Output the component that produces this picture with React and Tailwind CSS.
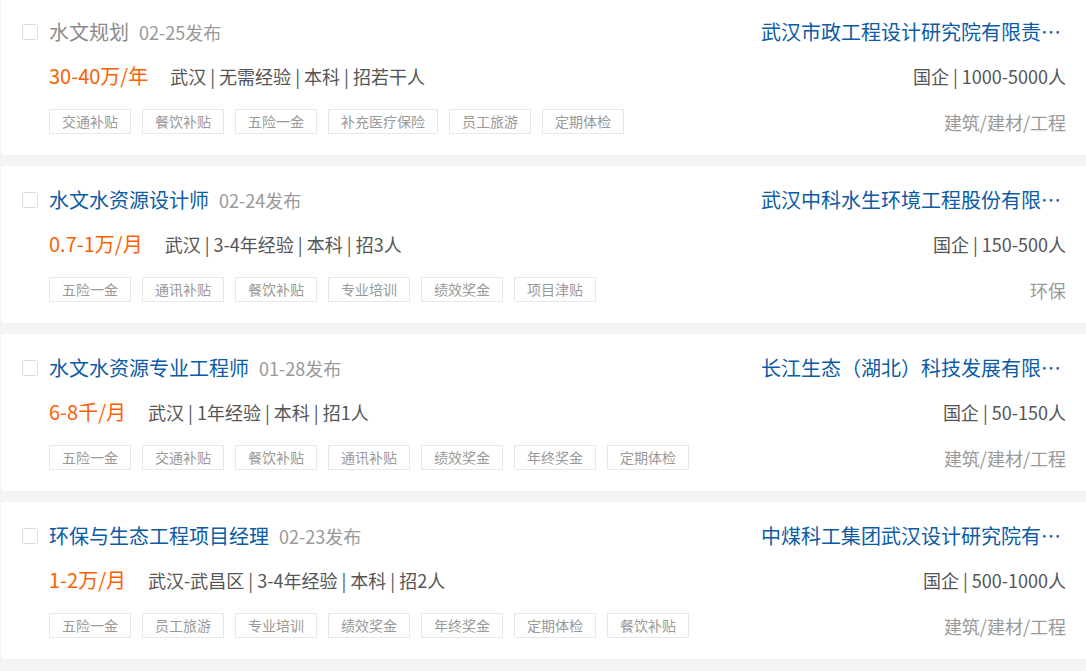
import React from 'react'

const jobs = [
  {
    title: '水文规划',
    visited: true,
    date: '02-25发布',
    salary: '30-40万/年',
    info: '武汉 | 无需经验 | 本科 | 招若干人',
    tags: ['交通补贴', '餐饮补贴', '五险一金', '补充医疗保险', '员工旅游', '定期体检'],
    company: '武汉市政工程设计研究院有限责任公司',
    companyInfo: '国企 | 1000-5000人',
    industry: '建筑/建材/工程',
  },
  {
    title: '水文水资源设计师',
    date: '02-24发布',
    salary: '0.7-1万/月',
    info: '武汉 | 3-4年经验 | 本科 | 招3人',
    tags: ['五险一金', '通讯补贴', '餐饮补贴', '专业培训', '绩效奖金', '项目津贴'],
    company: '武汉中科水生环境工程股份有限公司',
    companyInfo: '国企 | 150-500人',
    industry: '环保',
  },
  {
    title: '水文水资源专业工程师',
    date: '01-28发布',
    salary: '6-8千/月',
    info: '武汉 | 1年经验 | 本科 | 招1人',
    tags: ['五险一金', '交通补贴', '餐饮补贴', '通讯补贴', '绩效奖金', '年终奖金', '定期体检'],
    company: '长江生态（湖北）科技发展有限公司',
    companyInfo: '国企 | 50-150人',
    industry: '建筑/建材/工程',
  },
  {
    title: '环保与生态工程项目经理',
    date: '02-23发布',
    salary: '1-2万/月',
    info: '武汉-武昌区 | 3-4年经验 | 本科 | 招2人',
    tags: ['五险一金', '员工旅游', '专业培训', '绩效奖金', '年终奖金', '定期体检', '餐饮补贴'],
    company: '中煤科工集团武汉设计研究院有限公司',
    companyInfo: '国企 | 500-1000人',
    industry: '建筑/建材/工程',
  },
]

const JobCard = ({ job }) => {
  return (
    <div className="h-[157px] shrink-0 bg-white rounded-[4px] pl-[21px] pr-[25px] pt-[22px] flex flex-col">
      {/* title row */}
      <div className="flex items-center justify-between h-6">
        <div className="flex items-center">
          <span className="w-4 h-4 border border-[#dcdcdc] rounded-[2px] bg-white mr-[11px]"></span>
          <span className={`text-[20px] leading-6 ${job.visited ? 'text-[#8c8c8c]' : 'text-[#0b5ba6]'}`}>{job.title}</span>
          <span className="ml-[10px] text-[18px] leading-6 text-[#999]">{job.date}</span>
        </div>
        <span className="max-w-[301px] truncate text-[20px] leading-6 text-[#0b5ba6] mr-[4px]">{job.company}</span>
      </div>

      {/* salary row */}
      <div className="flex items-center justify-between h-6 mt-5 pl-[27px]">
        <div className="flex items-center">
          <span className="text-[20px] leading-6 text-[#fe6000]">{job.salary}</span>
          <span className="ml-[22px] text-[18px] leading-6 text-[#555]">{job.info}</span>
        </div>
        <span className="text-[18px] leading-6 text-[#555]">{job.companyInfo}</span>
      </div>

      {/* tags row */}
      <div className="flex items-center justify-between h-[25px] mt-[21px] pl-[27px]">
        <div className="flex items-center gap-[11px]">
          {job.tags.map((tag) => (
            <span key={tag} className="h-[25px] px-3 border border-[#e8e8e8] text-[14px] leading-[23px] text-[#999]">
              {tag}
            </span>
          ))}
        </div>
        <span className="text-[18px] leading-6 text-[#999]">{job.industry}</span>
      </div>
    </div>
  )
}

export default function App() {
  return (
    <div
      className="w-[1086px] h-[671px] overflow-hidden bg-[#f4f4f4]"
      style={{ fontFamily: '"Noto Sans CJK SC", "Noto Sans", sans-serif' }}
    >
      <div className="w-[1090px] ml-px -mt-[2px] flex flex-col gap-[11px]">
        {jobs.map((job) => (
          <JobCard key={job.title} job={job} />
        ))}
      </div>
    </div>
  )
}
